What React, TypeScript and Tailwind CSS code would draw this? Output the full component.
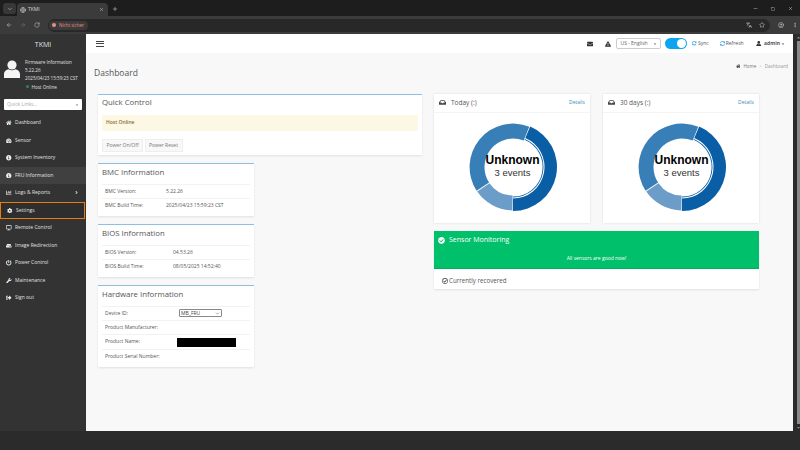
import { ArrowLeft, ArrowRight, Plus, RotateCw, X, Minus, Square, ChevronDown, Star, Languages, CircleUser, EllipsisVertical, Globe } from "lucide-react";
import { FaHome, FaTachometerAlt, FaInfoCircle, FaChartBar, FaCog, FaDesktop, FaHdd, FaPowerOff, FaWrench, FaSignOutAlt, FaUser, FaEnvelope, FaExclamationTriangle, FaSyncAlt, FaInbox, FaCheckCircle, FaRegCheckCircle, FaAngleRight, FaCaretDown, FaCaretUp } from "react-icons/fa";
import { ReactNode } from "react";

const menu = [
  { name: "Dashboard", icon: <FaHome /> },
  { name: "Sensor", icon: <FaTachometerAlt /> },
  { name: "System Inventory", icon: <FaInfoCircle /> },
  { name: "FRU Information", icon: <FaInfoCircle />, active: true },
  { name: "Logs & Reports", icon: <FaChartBar />, arrow: true },
  { name: "Settings", icon: <FaCog />, focus: true },
  { name: "Remote Control", icon: <FaDesktop /> },
  { name: "Image Redirection", icon: <FaHdd /> },
  { name: "Power Control", icon: <FaPowerOff /> },
  { name: "Maintenance", icon: <FaWrench /> },
  { name: "Sign out", icon: <FaSignOutAlt /> },
];

function arc(r1: number, r2: number, a: number, b: number) {
  const p = (r: number, d: number) => {
    const t = ((d - 90) * Math.PI) / 180;
    return `${(50 + r * Math.cos(t)).toFixed(2)} ${(50 + r * Math.sin(t)).toFixed(2)}`;
  };
  const large = b - a > 180 ? 1 : 0;
  return `M${p(r2, a)}A${r2} ${r2} 0 ${large} 1 ${p(r2, b)}L${p(r1, b)}A${r1} ${r1} 0 ${large} 0 ${p(r1, a)}Z`;
}

function Donut() {
  return (
    <div className="relative w-[100px] h-[100px] ml-[1px]">
      <svg viewBox="0 0 100 100" className="w-full h-full">
        <path d={arc(31.5, 44, 23, 180)} fill="#0a5ea6" />
        <path d={arc(29.6, 30.5, 23, 180)} fill="#0a5ea6" />
        <path d={arc(28.5, 43.4, 180.8, 235.5)} fill="#6c9dc8" />
        <path d={arc(28.5, 43.4, 237, 382)} fill="#397fb7" />
      </svg>
      <div className="absolute inset-0 flex flex-col items-center justify-center pb-[2px] font-['Liberation_Sans',sans-serif]">
        <div className="text-[12px] leading-[13px] font-bold text-black">Unknown</div>
        <div className="text-[9.5px] leading-[12px] text-[#333]">3 events</div>
      </div>
    </div>
  );
}

function EventCard({ title }: { title: string }) {
  return (
    <div className="w-[156px] h-[129.5px] bg-white shadow-[0_0_2px_rgba(0,0,0,0.12)] flex flex-col">
      <div className="h-[19px] flex items-center px-[4px] border-b border-[#f4f4f4]">
        <FaInbox className="text-[7px] text-[#444] ml-[1px] mr-[5px]" />
        <span className="text-[6.5px] text-[#555]">{title} (:)</span>
        <span className="ml-auto mr-[1px] mt-[1px] text-[5px] text-[#3c8dbc]">Details</span>
      </div>
      <div className="flex-1 flex justify-center pt-[4.5px]">
        <Donut />
      </div>
    </div>
  );
}

function Info({ title, children }: { title: string; children: ReactNode }) {
  return (
    <div className="w-[156px] bg-white border-t border-[#8ec1df] shadow-[0_1px_2px_rgba(0,0,0,0.1)] px-[4px]">
      <div className="h-[20px] pb-[1.5px] flex items-center text-[7.8px] text-[#555]">{title}</div>
      <div className="pb-[3.5px]">{children}</div>
    </div>
  );
}

function Row({ label, value, x }: { label: string; value?: ReactNode; x: string }) {
  return (
    <div className="h-[14.4px] flex items-center border-t border-[#f2f2f2] pl-[3px] text-[5px] text-[#555]">
      <span className={x}>{label}</span>
      {value}
    </div>
  );
}

export default function App() {
  return (
    <div className="w-[800px] h-[450px] overflow-hidden flex flex-col bg-[#2b2b2b] font-['Open_Sans',sans-serif]">
      <div className="h-[16px] bg-[#1d1d1d] flex items-end text-[#d5d5d5] shrink-0">
        <div className="w-[13px] h-[11px] ml-[3px] mb-[2px] rounded-[3px] bg-[#383838] flex items-center justify-center">
          <ChevronDown size={6} />
        </div>
        <div className="w-[91px] h-[13px] ml-[1px] rounded-t-[4px] bg-[#3b3b3b] flex items-center px-[3px]">
          <Globe size={6} />
          <span className="ml-[2px] text-[5px]">TKMI</span>
          <X size={5} className="ml-auto mr-[1px]" />
        </div>
        <Plus size={6} className="ml-[4px] mb-[4px]" />
        <div className="ml-auto flex items-center gap-[13px] mr-[7px] mb-[5px]">
          <Minus size={5} />
          <Square size={4} />
          <X size={5} />
        </div>
      </div>
      <div className="h-[18px] bg-[#3b3b3b] flex items-center text-[#c8c8c8] shrink-0">
        <ArrowLeft size={6} className="ml-[6px]" />
        <ArrowRight size={6} className="ml-[8px] text-[#777]" />
        <RotateCw size={6} className="ml-[8px]" />
        <div className="ml-[8px] w-[722px] h-[13px] rounded-full bg-[#282828] flex items-center pl-[1px] pr-[5px]">
          <div className="h-[9px] w-[39px] rounded-full bg-[#3b3b3b] flex items-center pl-[3px] text-[4.5px] text-[#f28b82]">
            <span className="w-[4px] h-[4px] rounded-full bg-[#f28b82] mr-[3px]"></span>Nicht sicher
          </div>
          <Languages size={6} className="ml-auto mr-[7px]" />
          <Star size={6} />
        </div>
        <CircleUser size={6} className="ml-[8px]" />
        <EllipsisVertical size={6} className="ml-[8px]" />
      </div>
      <div className="h-[397px] flex shrink-0">
        <div className="w-[86px] bg-[#333333] text-[#e0e0e0] shrink-0">
          <div className="h-[21px] pt-[2px] flex items-center justify-center text-[7px] font-medium">TKMI</div>
          <div className="h-[36px] flex">
            <div className="w-[25px] pl-[3.5px] pt-[5px]">
              <svg viewBox="0 0 16 18" className="w-[16px] h-[18px]" fill="#f4f4f4">
                <circle cx="8" cy="5" r="4.6" />
                <path d="M0 18v-3.6C0 11.5 2.5 9.6 4.6 9.3c2 1.3 4.8 1.3 6.8 0 2.1.3 4.6 2.2 4.6 5.1V18z" />
              </svg>
            </div>
            <div className="text-[4.6px] leading-[8.2px] pt-[3px] whitespace-nowrap">
              <div>Firmware Information</div>
              <div>5.22.26</div>
              <div>2025/04/23 15:59:23 CST</div>
              <div className="flex items-center">
                <span className="w-[3px] h-[3px] rounded-full bg-[#2e8b3d] mr-[2.5px] ml-[1px]"></span>Host Online
              </div>
            </div>
          </div>
          <div className="mx-[4px] mt-[8px] h-[11px] rounded-[1px] bg-white flex items-center px-[3px] text-[5px] text-[#aaa]">
            Quick Links...
            <FaCaretDown className="ml-auto text-[4px] text-[#777]" />
          </div>
          <div className="mt-[4px]">
            {menu.map((m) => (
              <div
                key={m.name}
                className={`h-[17.5px] flex items-center pl-[6px] text-[5px] ${m.active ? "bg-[#404040]" : ""} ${m.focus ? "bg-[#2e2e2e] w-[85px] border-[1.3px] border-[#e87c10] pl-[4.7px]" : ""}`}
              >
                <span className="w-[9px] text-[5.5px] text-[#eee]">{m.icon}</span>
                {m.name}
                {m.arrow && <FaAngleRight className="ml-auto mr-[7px] text-[5px]" />}
              </div>
            ))}
          </div>
        </div>
        <div className="w-[707px] shrink-0 flex flex-col">
          <div className="h-[19px] bg-white flex items-center shrink-0 text-[5px] text-[#555]">
            <div className="ml-[10px] w-[8px] flex flex-col gap-[1.5px]">
              <span className="h-[1px] bg-[#444]"></span>
              <span className="h-[1px] bg-[#444]"></span>
              <span className="h-[1px] bg-[#444]"></span>
            </div>
            <div className="ml-auto flex items-center">
              <FaEnvelope className="text-[6px] text-[#333]" />
              <FaExclamationTriangle className="ml-[12px] text-[6px] text-[#333]" />
              <div className="ml-[5px] w-[45px] h-[11px] rounded-[2px] border border-[#ccc] flex items-center px-[3px] text-[#666]">
                US - English
                <FaCaretDown className="ml-auto text-[4px]" />
              </div>
              <div className="ml-[4px] w-[22px] h-[11px] rounded-full bg-[#0ea5f0] flex items-center justify-end pr-[1px]">
                <span className="w-[9px] h-[9px] rounded-full bg-white"></span>
              </div>
              <FaSyncAlt className="ml-[5px] text-[4.5px] text-[#3aa6e8]" />
              <span className="ml-[1px]">Sync</span>
              <FaSyncAlt className="ml-[11px] text-[5px] text-[#3aa6e8]" />
              <span className="ml-[1px]">Refresh</span>
              <FaUser className="ml-[12px] text-[5.5px] text-[#333]" />
              <span className="ml-[3px] font-bold">admin</span>
              <FaCaretDown className="ml-[1px] mr-[8px] text-[4px]" />
            </div>
          </div>
          <div className="flex-1 bg-[#f8f8f8]">
            <div className="h-[40.5px] flex items-start justify-between pl-[8px] pr-[5px]">
              <span className="mt-[12.5px] text-[8.5px] leading-[13px] text-[#555]">Dashboard</span>
              <span className="mt-[10px] flex items-center text-[4.5px] text-[#777]">
                <FaHome className="mr-[3px] text-[#444]" />Home<span className="mx-[3px] text-[#bbb]">&gt;</span><span className="text-[#999]">Dashboard</span>
              </span>
            </div>
            <div className="flex pl-[12px] gap-[12px]">
              <div className="w-[324px] flex flex-col gap-[7.7px]">
                <div className="bg-white border-t border-[#8ec1df] shadow-[0_1px_2px_rgba(0,0,0,0.1)] h-[61.5px] px-[4px]">
                  <div className="h-[17px] flex items-center text-[7.8px] text-[#555]">Quick Control</div>
                  <div className="mt-[3px] h-[16.5px] bg-[#fcf8e3] rounded-[1px] flex items-center px-[4px] text-[5px] font-semibold text-[#8a6d3b]">Host Online</div>
                  <div className="mt-[7.5px] flex gap-[1.5px] text-[5px] text-[#777]">
                    <div className="h-[13.5px] w-[41px] bg-[#f8f8f8] border border-[#eee] flex items-center justify-center">Power On/Off</div>
                    <div className="h-[13.5px] w-[38px] bg-[#f8f8f8] border border-[#eee] flex items-center justify-center">Power Reset</div>
                  </div>
                </div>
                <Info title="BMC Information">
                  <Row label="BMC Version:" x="w-[61px]" value="5.22.26" />
                  <Row label="BMC Build Time:" x="w-[61px]" value="2025/04/23 15:59:23 CST" />
                </Info>
                <Info title="BIOS Information">
                  <Row label="BIOS Version:" x="w-[68px]" value="04.53.26" />
                  <Row label="BIOS Build Time:" x="w-[68px]" value="08/05/2025 14:52:40" />
                </Info>
                <Info title="Hardware Information">
                  <Row
                    label="Device ID:"
                    x="w-[74px]"
                    value={
                      <div className="w-[43px] h-[8px] border border-[#888] rounded-[1px] bg-white flex items-center px-[1px] text-[#444]">
                        MB_FRU
                        <ChevronDown size={5} className="ml-auto" />
                      </div>
                    }
                  />
                  <Row label="Product Manufacturer:" x="w-[74px]" />
                  <Row label="Product Name:" x="w-[72px]" value={<div className="w-[59px] h-[9px] bg-black"></div>} />
                  <Row label="Product Serial Number:" x="w-[74px]" />
                </Info>
              </div>
              <div className="w-[325px] flex flex-col gap-[8px]">
                <div className="flex gap-[13px]">
                  <EventCard title="Today" />
                  <EventCard title="30 days" />
                </div>
                <div className="shadow-[0_1px_2px_rgba(0,0,0,0.1)] bg-white">
                  <div className="h-[18px] bg-[#00c06b] flex items-center px-[4px] text-white">
                    <FaCheckCircle className="text-[7px] mr-[4px]" />
                    <span className="text-[7px] font-medium">Sensor Monitoring</span>
                  </div>
                  <div className="h-[20.3px] bg-[#00c06b] border-b border-[#00b060] flex items-center justify-center text-[5px] text-white">All sensors are good now!</div>
                  <div className="h-[20px] pt-[3px] flex items-center px-[8px] text-[6.2px] text-[#555]">
                    <FaRegCheckCircle className="text-[6px] mr-[1px] text-[#333]" />
                    Currently recovered
                  </div>
                </div>
              </div>
            </div>
          </div>
        </div>
        <div className="w-[7px] bg-[#2b2b2b] shrink-0 flex flex-col items-center pl-[4px] pt-[1px] pb-[1px] text-[#888]">
          <FaCaretUp className="text-[5px] shrink-0" />
          <div className="w-[4px] flex-1 my-[1px] bg-[#8a8a8a]"></div>
          <FaCaretDown className="text-[5px] shrink-0" />
        </div>
      </div>
    </div>
  );
}
